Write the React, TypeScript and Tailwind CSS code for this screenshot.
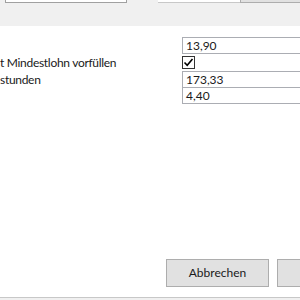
const rowBox = "h-[17px] border border-[#abadb3] bg-white pl-[3px] flex items-center";

export default function App() {
  return (
    <div
      className="w-[300px] h-[300px] overflow-hidden bg-white flex flex-col text-[12px] text-[#1a1a1a]"
      style={{ fontFamily: 'Lato, "Noto Sans", sans-serif' }}
    >
      {/* cut-off top toolbar */}
      <div className="h-[3px] bg-[#f0f0f0] flex shrink-0">
        <div className="ml-[5px] w-[122px] bg-white border-x border-b border-[#a0a0a0]" />
        <div className="ml-[31px] w-[82px] bg-white border-b border-[#c8c8c8]" />
        <div className="flex-1 bg-[#e1e1e1] border-l border-b border-[#adadad]" />
      </div>
      <div className="h-[23px] bg-[#f0f0f0] shrink-0" />

      {/* form */}
      <div className="pt-[11px] flex flex-col">
        <div className="flex">
          <div className="w-[182px] shrink-0" />
          <div className={`${rowBox} w-[140px] shrink-0`}>13,90</div>
        </div>
        <div className="flex h-[17px] items-center">
          <div className="w-[182px] shrink-0 whitespace-nowrap leading-none tracking-[-0.3px]">
            t Mindestlohn vorfüllen
          </div>
          <div className="w-[13px] h-[13px] border border-[#333333] bg-white flex items-center justify-center">
            <svg width="11" height="11" viewBox="0 0 11 11">
              <path d="M1.5 5.5 L4.2 8.2 L9.5 2" fill="none" stroke="#000" strokeWidth="1.6" />
            </svg>
          </div>
        </div>
        <div className="flex">
          <div className="w-[182px] shrink-0 whitespace-nowrap flex items-center leading-none tracking-[-0.3px]">
            stunden
          </div>
          <div className={`${rowBox} w-[140px] shrink-0`}>173,33</div>
        </div>
        <div className="flex -mt-px">
          <div className="w-[182px] shrink-0" />
          <div className={`${rowBox} w-[140px] shrink-0`}>4,40</div>
        </div>
      </div>

      <div className="flex-1" />

      {/* dialog buttons */}
      <div className="flex gap-[8px] pl-[166px] mb-[10px]">
        <button className="w-[103px] h-[28px] shrink-0 bg-[#e1e1e1] border border-[#adadad] flex items-center justify-center">
          Abbrechen
        </button>
        <button className="w-[103px] h-[28px] shrink-0 bg-[#e1e1e1] border border-[#adadad]" />
      </div>
      <div className="h-[3px] border-t border-[#c8c8c8] bg-[#f0f0f0] shrink-0" />
    </div>
  );
}
